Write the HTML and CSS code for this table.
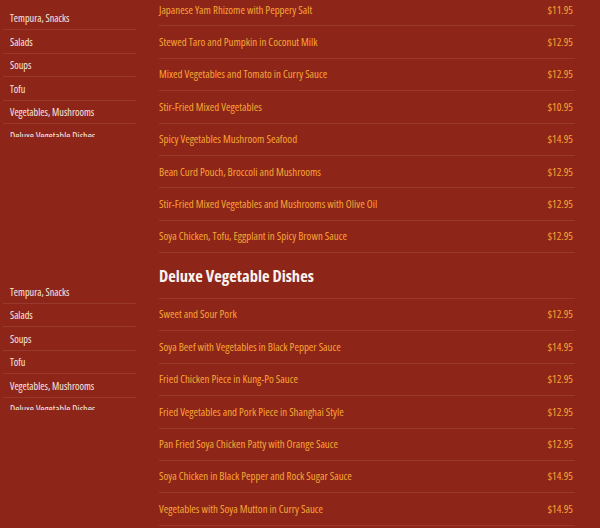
FILE: index.html
```html
<!DOCTYPE html>
<html lang="en">
<head>
<meta charset="utf-8">
<title>Menu</title>
<link rel="stylesheet" href="styles.css">
</head>
<body>
<div class="page">
  <section class="section first">
    <nav class="sidebar">
      <a class="side-item">Tempura, Snacks</a>
      <a class="side-item">Salads</a>
      <a class="side-item">Soups</a>
      <a class="side-item">Tofu</a>
      <a class="side-item">Vegetables, Mushrooms</a>
      <a class="side-item">Deluxe Vegetable Dishes</a>
    </nav>
    <div class="menu">
      <div class="row"><span class="name">Japanese Yam Rhizome with Peppery Salt</span><span class="price">$11.95</span></div>
      <div class="row"><span class="name">Stewed Taro and Pumpkin in Coconut Milk</span><span class="price">$12.95</span></div>
      <div class="row"><span class="name">Mixed Vegetables and Tomato in Curry Sauce</span><span class="price">$12.95</span></div>
      <div class="row"><span class="name">Stir-Fried Mixed Vegetables</span><span class="price">$10.95</span></div>
      <div class="row"><span class="name">Spicy Vegetables Mushroom Seafood</span><span class="price">$14.95</span></div>
      <div class="row"><span class="name">Bean Curd Pouch, Broccoli and Mushrooms</span><span class="price">$12.95</span></div>
      <div class="row"><span class="name">Stir-Fried Mixed Vegetables and Mushrooms with Olive Oil</span><span class="price">$12.95</span></div>
      <div class="row"><span class="name">Soya Chicken, Tofu, Eggplant in Spicy Brown Sauce</span><span class="price">$12.95</span></div>
    </div>
  </section>
  <section class="section second">
    <nav class="sidebar">
      <a class="side-item">Tempura, Snacks</a>
      <a class="side-item">Salads</a>
      <a class="side-item">Soups</a>
      <a class="side-item">Tofu</a>
      <a class="side-item">Vegetables, Mushrooms</a>
      <a class="side-item">Deluxe Vegetable Dishes</a>
    </nav>
    <div class="menu">
      <h2 class="heading">Deluxe Vegetable Dishes</h2>
      <div class="row"><span class="name">Sweet and Sour Pork</span><span class="price">$12.95</span></div>
      <div class="row"><span class="name">Soya Beef with Vegetables in Black Pepper Sauce</span><span class="price">$14.95</span></div>
      <div class="row"><span class="name">Fried Chicken Piece in Kung-Po Sauce</span><span class="price">$12.95</span></div>
      <div class="row"><span class="name">Fried Vegetables and Pork Piece in Shanghai Style</span><span class="price">$12.95</span></div>
      <div class="row"><span class="name">Pan Fried Soya Chicken Patty with Orange Sauce</span><span class="price">$12.95</span></div>
      <div class="row"><span class="name">Soya Chicken in Black Pepper and Rock Sugar Sauce</span><span class="price">$14.95</span></div>
      <div class="row"><span class="name">Vegetables with Soya Mutton in Curry Sauce</span><span class="price">$14.95</span></div>
    </div>
  </section>
</div>
</body>
</html>
```

FILE: styles.css
```css
html, body {
  margin: 0;
  padding: 0;
  background: #8d2619;
  overflow: hidden;
}
body {
  font-family: "Open Sans", "DejaVu Sans Condensed", sans-serif;
  font-stretch: 75%;
  height: 528px;
}
.page {
  width: 600px;
  margin-top: -6px;
}
.section {
  display: flex;
  align-items: flex-start;
}
.sidebar {
  width: 133px;
  margin-left: 3px;
  height: 130px;
  overflow: hidden;
  display: flex;
  flex-direction: column;
  flex-shrink: 0;
}
.first .sidebar { margin-top: 12.5px; }
.second .sidebar { margin-top: 27px; }
.side-item {
  display: block;
  padding: 4.5px 7px 4px;
  line-height: 14px;
  font-size: 10.2px;
  font-weight: 500;
  color: #f7e8e1;
  border-bottom: 1px solid rgba(255, 255, 255, 0.09);
  white-space: nowrap;
}
.menu {
  width: 416px;
  margin-left: 23px;
}
.row {
  display: flex;
  justify-content: space-between;
  padding: 8.5px 2px 8.5px 0;
  line-height: 14.4px;
  font-size: 10.9px;
  font-weight: 500;
  color: #f9a534;
  border-bottom: 1px solid rgba(255, 255, 255, 0.09);
}
.heading {
  margin: 0;
  padding: 12.7px 0 12px;
  line-height: 20px;
  font-size: 16.5px;
  font-weight: 700;
  color: #fbf2ee;
  border-bottom: 1px solid rgba(255, 255, 255, 0.09);
}
```
